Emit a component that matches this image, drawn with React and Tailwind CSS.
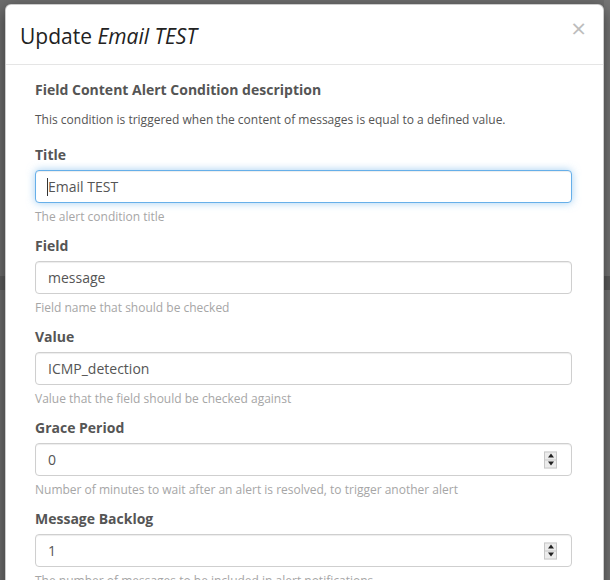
import React from 'react';

const font = { fontFamily: '"Open Sans", "Liberation Sans", sans-serif' };

const Spinner = () => (
  <div className="absolute right-[14px] top-1/2 -translate-y-1/2 flex flex-col w-[13px] h-[17px] border border-[#c8c8c8] bg-[#ececec]">
    <div className="flex-1 flex items-center justify-center border-b border-[#c8c8c8]">
      <div className="w-0 h-0 border-l-[3px] border-r-[3px] border-b-[4px] border-l-transparent border-r-transparent border-b-[#222]" />
    </div>
    <div className="flex-1 flex items-center justify-center">
      <div className="w-0 h-0 border-l-[3px] border-r-[3px] border-t-[4px] border-l-transparent border-r-transparent border-t-[#222]" />
    </div>
  </div>
);

const Field = ({ label, value, help, focused, number }) => (
  <div className="mb-[11px]">
    <div className="text-[14px] leading-[20px] font-bold text-[#555] mb-[5px]">{label}</div>
    <div
      className={`relative h-[33px] rounded-[4px] border bg-white flex items-center pl-[12px] text-[14px] text-[#555] ${
        focused
          ? 'border-[#66afe9] shadow-[inset_0_1px_1px_rgba(0,0,0,0.075),0_0_8px_rgba(102,175,233,0.6)]'
          : 'border-[#cfcfcf] shadow-[inset_0_1px_1px_rgba(0,0,0,0.075)]'
      }`}
    >
      {focused && <span className="w-px h-[18px] bg-[#333] -ml-[1px]" />}
      <span>{value}</span>
      {number && <Spinner />}
    </div>
    <div className="mt-[5px] text-[12px] leading-[17px] text-[#a6a6a6]">{help}</div>
  </div>
);

export default function App() {
  return (
    <div className="relative h-[580px] w-[610px] overflow-hidden bg-[#6d6d6d]" style={font}>
      <div className="absolute right-0 top-0 h-full w-[6px] bg-[#767676]" />
      <div className="absolute left-0 top-[276px] h-[14px] w-[5px] bg-[#5d5d5d]" />
      <div className="absolute right-0 top-[276px] h-[14px] w-[6px] bg-[#5d5d5d]" />
      <div className="relative ml-[5px] mt-[4px] w-[599px] rounded-[6px] border border-[rgba(0,0,0,0.2)] bg-white shadow-[0_5px_15px_rgba(0,0,0,0.5)]">
        <div className="flex items-start justify-between border-b border-[#e5e5e5] px-[14px] pt-[19px] pb-[16px]">
          <h4 className="text-[21px] leading-[24px] text-[#222]">
            Update <em>Email TEST</em>
          </h4>
          <span className="text-[26px] leading-[20px] text-[#bdbdbd] mr-[3px] -mt-[6px]">×</span>
        </div>
        <div className="pl-[29px] pr-[31px] pt-[15px] pb-[20px]">
          <div className="text-[14px] leading-[20px] font-bold text-[#555] mb-[11px]">
            Field Content Alert Condition description
          </div>
          <div className="text-[12px] leading-[17px] text-[#555] mb-[17px]">
            This condition is triggered when the content of messages is equal to a defined value.
          </div>
          <Field label="Title" value="Email TEST" help="The alert condition title" focused />
          <Field label="Field" value="message" help="Field name that should be checked" />
          <Field label="Value" value="ICMP_detection" help="Value that the field should be checked against" />
          <Field
            label="Grace Period"
            value="0"
            help="Number of minutes to wait after an alert is resolved, to trigger another alert"
            number
          />
          <Field
            label="Message Backlog"
            value="1"
            help="The number of messages to be included in alert notifications"
            number
          />
        </div>
      </div>
    </div>
  );
}
